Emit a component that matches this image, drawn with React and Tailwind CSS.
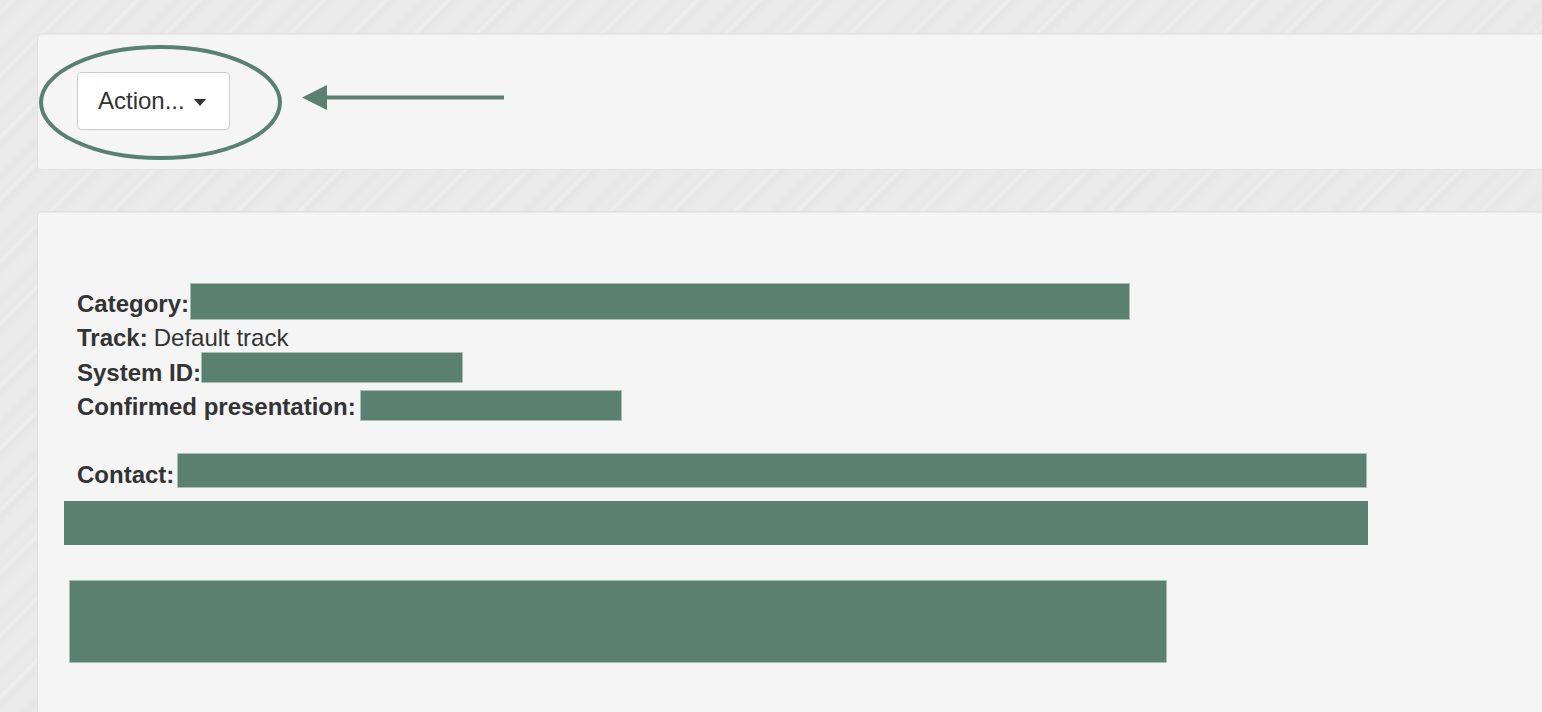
export default function App() {
  const box = "bg-[#5a8072] border border-[#a9bfb6]";
  return (
    <div
      className="relative h-[712px] w-full overflow-hidden bg-[#e9e9e9] bg-[repeating-linear-gradient(135deg,#eaeaea_0px,#e8e8e8_6px,#eeeeee_9px,#e6e6e6_13px,#eaeaea_20px,#ebebeb_31px,#e7e7e7_37px,#eaeaea_44px)] pt-[33px] pl-[37px] text-[#333] text-[24px] leading-[34.4px]"
      style={{ fontFamily: '"Liberation Sans", Arial, Helvetica, sans-serif' }}
    >
      {/* Top well */}
      <div className="w-[1540px] rounded-[4px] border border-[#e0e0e0] bg-[#f5f5f5] pt-[38px] pb-[39px] pl-[39px] shadow-[inset_0_1px_1px_rgba(0,0,0,0.05)]">
        <button className="flex h-[58px] w-[153px] items-center rounded-[4px] border border-[#cccccc] bg-white pl-[20px] text-[24px] text-[#333]">
          <span className="mt-[1px]">Action...</span>
          <span className="ml-[9px] mt-[3px] h-0 w-0 border-x-[6px] border-t-[7px] border-x-transparent border-t-[#333]"></span>
        </button>
      </div>

      {/* Second well */}
      <div className="mt-[41px] h-[600px] w-[1540px] rounded-[4px] border border-[#e0e0e0] bg-[#f5f5f5] pt-[75px] pl-[39px] shadow-[inset_0_1px_1px_rgba(0,0,0,0.05)]">
        <div className="flex h-[34.4px] items-start">
          <span className="font-bold">Category:</span>
          <span className={`ml-[1px] mt-[-4px] h-[37px] w-[940px] shrink-0 ${box}`}></span>
        </div>
        <div className="flex h-[34.4px] items-start">
          <span className="font-bold">Track:</span>
          <span className="ml-[6px]">Default track</span>
        </div>
        <div className="flex h-[34.4px] items-start">
          <span className="font-bold">System ID:</span>
          <span className={`ml-[0px] mt-[-4px] h-[31px] w-[262px] shrink-0 ${box}`}></span>
        </div>
        <div className="flex h-[34.4px] items-start">
          <span className="font-bold">Confirmed presentation:</span>
          <span className={`ml-[4px] mt-[-0.5px] h-[31px] w-[262px] shrink-0 ${box}`}></span>
        </div>

        <div className="mt-[33px] flex h-[34.4px] items-start">
          <span className="font-bold">Contact:</span>
          <span className={`ml-[3px] mt-[-5px] h-[35px] w-[1190px] shrink-0 ${box}`}></span>
        </div>
        <div className="mt-[9px] ml-[-13px] h-[44px] w-[1304px] bg-[#5a8072]"></div>
        <div className={`mt-[35px] ml-[-8px] h-[83px] w-[1098px] ${box}`}></div>
      </div>

      {/* Annotation overlay */}
      <svg
        className="pointer-events-none absolute left-0 top-0"
        width="540"
        height="180"
        viewBox="0 0 540 180"
      >
        <ellipse cx="160.5" cy="102.5" rx="119.5" ry="55.5" fill="none" stroke="#5a8072" strokeWidth="4" />
        <line x1="320" y1="97.5" x2="504" y2="97.5" stroke="#5a8072" strokeWidth="4" />
        <polygon points="302,97.5 327,85 327,110" fill="#5a8072" />
      </svg>
    </div>
  );
}
